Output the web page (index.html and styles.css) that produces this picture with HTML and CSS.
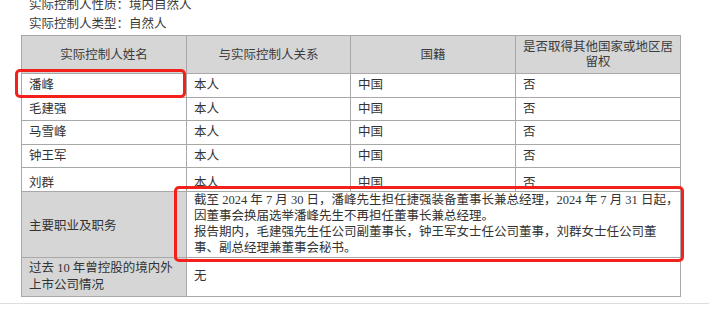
FILE: index.html
```html
<!DOCTYPE html>
<html lang="zh">
<head>
<meta charset="utf-8">
<link rel="stylesheet" href="styles.css">
</head>
<body>
<div class="page">
  <div class="intro">
    <div>实际控制人性质：境内自然人</div>
    <div>实际控制人类型：自然人</div>
  </div>
  <div class="wrap">
    <table class="tbl">
      <colgroup><col class="c1"><col class="c2"><col class="c3"><col class="c4"></colgroup>
      <tr class="head">
        <th>实际控制人姓名</th>
        <th>与实际控制人关系</th>
        <th>国籍</th>
        <th class="two">是否取得其他国家或地区居<br>留权</th>
      </tr>
      <tr class="r"><td>潘峰</td><td>本人</td><td>中国</td><td>否</td></tr>
      <tr class="r"><td>毛建强</td><td>本人</td><td>中国</td><td>否</td></tr>
      <tr class="r"><td>马雪峰</td><td>本人</td><td>中国</td><td>否</td></tr>
      <tr class="r"><td>钟王军</td><td>本人</td><td>中国</td><td>否</td></tr>
      <tr class="r last"><td>刘群</td><td>本人</td><td>中国</td><td>否</td></tr>
      <tr class="duty">
        <td class="label">主要职业及职务</td>
        <td colspan="3" class="para">截至 2024 年 7 月 30 日，潘峰先生担任捷强装备董事长兼总经理，2024 年 7 月 31 日起，<br>因董事会换届选举潘峰先生不再担任董事长兼总经理。<br>报告期内，毛建强先生任公司副董事长，钟王军女士任公司董事，刘群女士任公司董<br>事、副总经理兼董事会秘书。</td>
      </tr>
      <tr class="past">
        <td class="label">过去 10 年曾控股的境内外<br>上市公司情况</td>
        <td colspan="3">无</td>
      </tr>
    </table>
    <div class="mark mark-name"></div>
    <div class="mark mark-duty"></div>
  </div>
  <div class="rule"></div>
</div>
</body>
</html>
```

FILE: styles.css
```css
html, body {
  margin: 0;
  padding: 0;
  background: #ffffff;
}
body {
  width: 709px;
  height: 309px;
  overflow: hidden;
  font-family: "Liberation Serif", "Noto Sans CJK SC", serif;
  font-size: 12.5px;
  color: #333333;
}
.page {
  position: relative;
  height: 309px;
}
.intro {
  margin-top: -4px;
  padding-left: 29px;
  line-height: 19px;
  color: #3a3a3a;
}
.wrap {
  position: relative;
  margin: 1px 0 0 21px;
  width: 659px;
}
.tbl {
  border-collapse: collapse;
  table-layout: fixed;
  width: 659px;
}
.c1 { width: 165px; }
.c2 { width: 164px; }
.c3 { width: 165px; }
.c4 { width: 165px; }
.tbl th, .tbl td {
  border: 1px solid #a8a8a8;
  padding: 0 7px;
  text-align: left;
  vertical-align: middle;
  font-weight: normal;
  white-space: nowrap;
  box-sizing: border-box;
}
.head th {
  background: #d6d6d6;
  text-align: center;
  height: 38px;
  line-height: 15px;
  color: #3c3c3c;
  padding-top: 1px;
}
.r td {
  height: 23.6px;
  line-height: 16px;
}
.r.last td {
  vertical-align: bottom;
}
.label {
  background: #d6d6d6;
}
.duty td {
  height: 66px;
}
.para {
  line-height: 16px;
  padding-top: 2px;
}
.past td {
  height: 39px;
  line-height: 17px;
}
.mark {
  position: absolute;
  border: 3px solid #f4201c;
  border-radius: 5px;
  box-sizing: border-box;
}
.mark-name {
  left: -6px;
  top: 34px;
  width: 171px;
  height: 29px;
}
.mark-duty {
  left: 153px;
  top: 151px;
  width: 510px;
  height: 76px;
}
.rule {
  position: absolute;
  left: 0;
  right: 0;
  top: 307px;
  height: 1px;
  background: #dddddd;
}
```
